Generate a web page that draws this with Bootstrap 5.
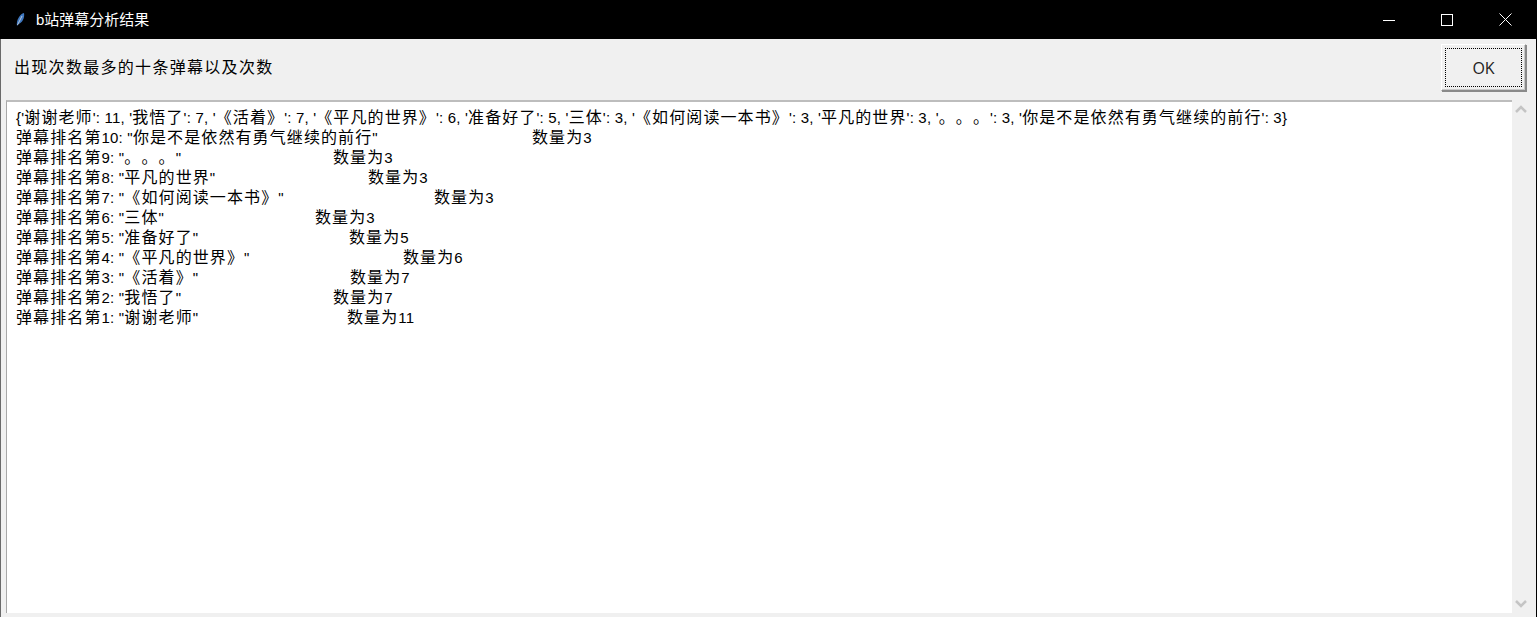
<!DOCTYPE html>
<html lang="zh">
<head>
  <meta charset="UTF-8">
  <title>b站弹幕分析结果</title>
  <link href="https://cdn.jsdelivr.net/npm/bootstrap@5.3.3/dist/css/bootstrap.min.css" rel="stylesheet">
  <style>
    html, body { height: 100%; overflow: hidden; }
    body { background: #f0f0f0; font-family: "Liberation Sans", "Noto Sans CJK SC", sans-serif; font-size: 15px; color: #000; }
    .app-window { height: 617px; border-right: 1px solid #000; border-left: 1px solid #6a6a6a; }
    .title-bar { height: 39px; background: #000; color: #fff; margin-left: -1px; margin-right: -1px; padding-left: 16px; }
    .title-text { margin-left: 11px; font-size: 15px; line-height: 36px; }
    .title-ctrls { margin-right: 3px; }
    .win-ctrl { width: 58px; height: 39px; }
    .tool-row { height: 61px; padding: 5px 10px 9px 13px; }
    .tool-label { font-size: 16px; letter-spacing: 1.3px; }
    .ok-btn { width: 85px; height: 47px; padding: 3px; background: #f0f0f0; border: 1px solid; border-color: #fff #8a8a8a #8a8a8a #fff; box-shadow: 1px 1px 0 #8a8a8a, inset -1px -1px 0 #c8c8c8; }
    .ok-inner { border: 1px dotted #000; color: #222; font-size: 16px; font-family: "Open Sans", sans-serif; }
    .text-wrap { height: 513px; padding-left: 5px; }
    .result-box { width: 1506px; background: #fff; border-top: 2px solid #bdbdbd; border-left: 1px solid #a8a8a8; padding: 6px 0 0 9px; white-space: pre; letter-spacing: .2px; }
    .result-box > div { height: 20px; line-height: 20px; }
    .hz { font-size: 16px; letter-spacing: 1.1px; line-height: 20px; font-kerning: none; text-spacing-trim: space-all; }
    .scroll-rail { width: 18px; }
  </style>
</head>
<body>
  <div class="app-window d-flex flex-column">
    <div class="title-bar d-flex align-items-center">
      <svg width="9" height="15" viewBox="0 0 9 15">
        <path d="M1 14 C0 8 4 2 8 1 C9 6 6 11 2.5 12 Z" fill="#3f78c0"/>
        <path d="M1.5 13 L6 4" stroke="#b9c6d6" stroke-width="1"/>
      </svg>
      <span class="title-text">b站弹幕分析结果</span>
      <div class="d-flex ms-auto title-ctrls">
        <div class="win-ctrl d-flex align-items-center justify-content-center">
          <svg width="12" height="12" viewBox="0 0 12 12"><path d="M0 6.5 H12" stroke="#fff"/></svg>
        </div>
        <div class="win-ctrl d-flex align-items-center justify-content-center">
          <svg width="12" height="12" viewBox="0 0 12 12"><rect x=".5" y=".5" width="11" height="11" fill="none" stroke="#fff"/></svg>
        </div>
        <div class="win-ctrl d-flex align-items-center justify-content-center">
          <svg width="13" height="13" viewBox="0 0 13 13"><path d="M.5 .5 L12.5 12.5 M12.5 .5 L.5 12.5" stroke="#fff"/></svg>
        </div>
      </div>
    </div>
    <div class="tool-row d-flex align-items-center justify-content-between">
      <span class="tool-label">出现次数最多的十条弹幕以及次数</span>
      <button class="ok-btn" type="button"><div class="ok-inner h-100 d-flex align-items-center justify-content-center">OK</div></button>
    </div>
    <div class="text-wrap d-flex">
      <div class="result-box" id="result"></div>
      <div class="scroll-rail d-flex flex-column justify-content-between align-items-center py-1">
        <svg width="14" height="10" viewBox="0 0 14 10"><path d="M2 8 L7 3 L12 8" fill="none" stroke="#c4c4c4" stroke-width="2.5"/></svg>
        <svg width="14" height="10" viewBox="0 0 14 10"><path d="M2 2 L7 7 L12 2" fill="none" stroke="#c4c4c4" stroke-width="2.5"/></svg>
      </div>
    </div>
  </div>
  <script>
    const rows = [
      ['弹幕排名第10: "你是不是依然有勇气继续的前行"', 516, 3],
      ['弹幕排名第9: "。。。"', 317, 3],
      ['弹幕排名第8: "平凡的世界"', 352, 3],
      ['弹幕排名第7: "《如何阅读一本书》"', 418, 3],
      ['弹幕排名第6: "三体"', 299, 3],
      ['弹幕排名第5: "准备好了"', 333, 5],
      ['弹幕排名第4: "《平凡的世界》"', 387, 6],
      ['弹幕排名第3: "《活着》"', 334, 7],
      ['弹幕排名第2: "我悟了"', 317, 7],
      ['弹幕排名第1: "谢谢老师"', 331, 11]
    ];
    // chinese runs are larger than the latin text in this window
    const hz = s => s.replace(/[\u3000-\u303f\u4e00-\u9fff]+/g, m => `<span class="hz">${m}</span>`);
    const box = document.getElementById("result");
    box.innerHTML = `<div>${hz("{'谢谢老师': 11, '我悟了': 7, '《活着》': 7, '《平凡的世界》': 6, '准备好了': 5, '三体': 3, '《如何阅读一本书》': 3, '平凡的世界': 3, '。。。': 3, '你是不是依然有勇气继续的前行': 3}")}</div>`;
    rows.forEach(r => {
      box.innerHTML += `<div class="d-flex"><span style="width:${r[1]}px">${hz(r[0])}</span><span>${hz("数量为")}${r[2]}</span></div>`;
    });
  </script>
  <script src="https://cdn.jsdelivr.net/npm/bootstrap@5.3.3/dist/js/bootstrap.bundle.min.js"></script>
</body>
</html>
